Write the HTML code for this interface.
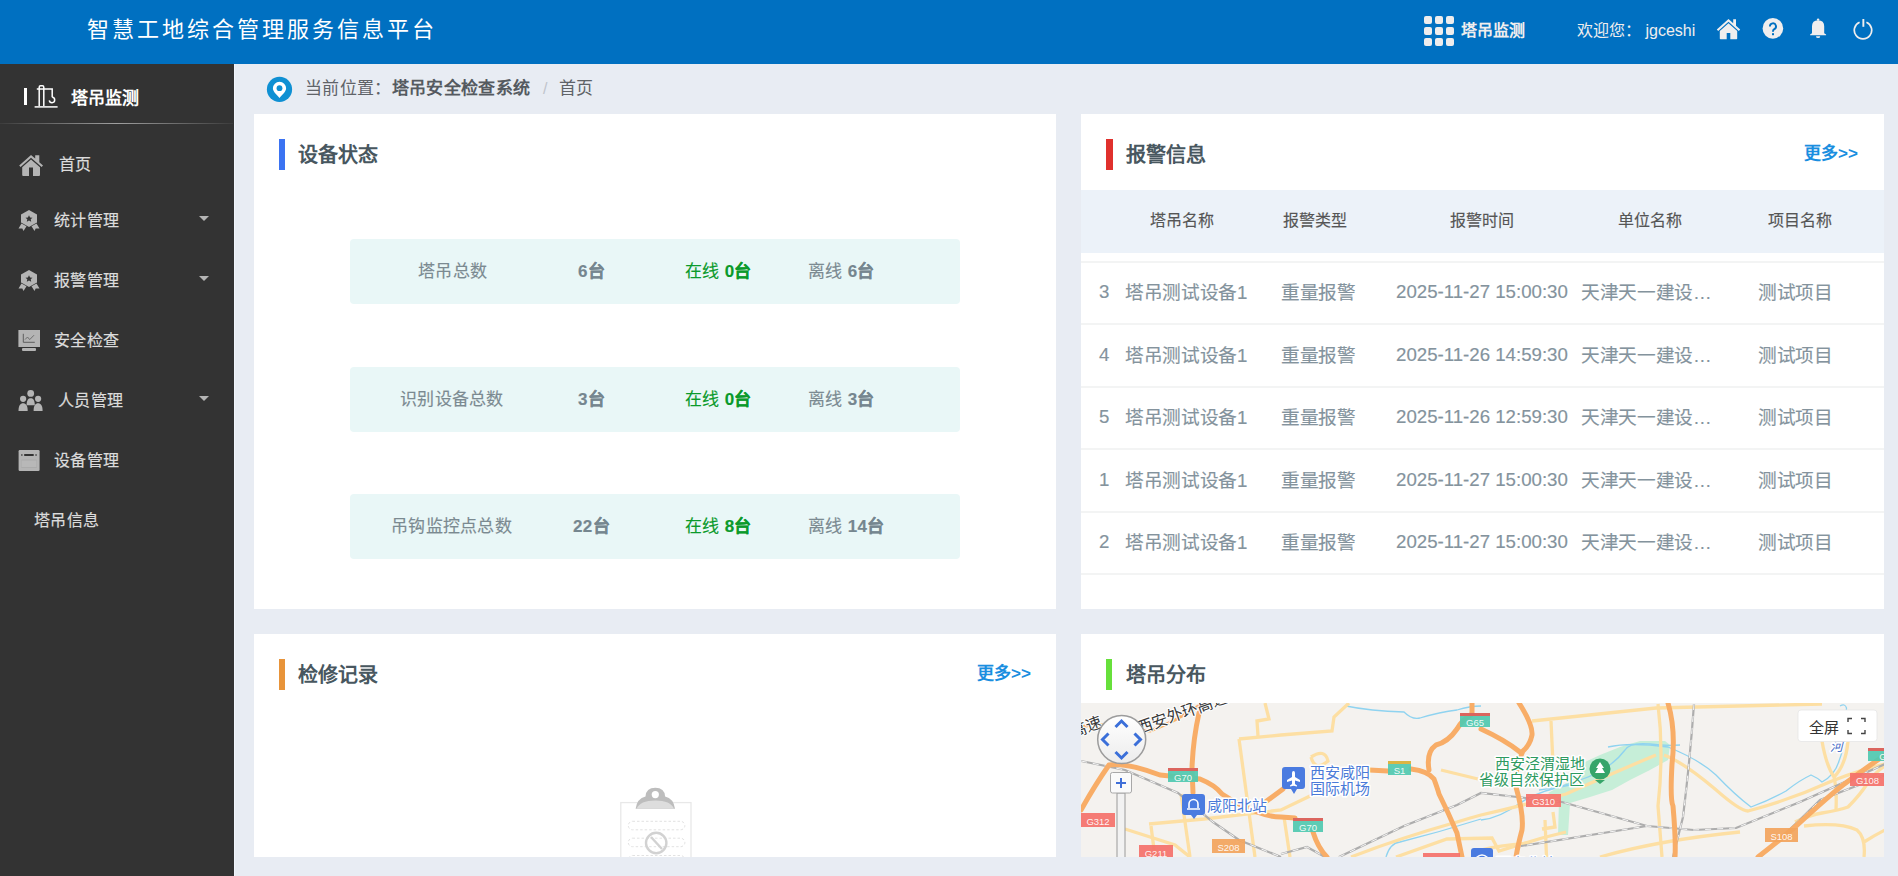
<!DOCTYPE html>
<html lang="zh-CN"><head><meta charset="utf-8">
<style>
*{box-sizing:border-box;margin:0;padding:0}
html,body{width:1898px;height:876px;overflow:hidden;background:#e8ecf3;font-family:"Liberation Sans",sans-serif}
.abs{position:absolute}
.t{position:absolute;white-space:nowrap;line-height:1}
#hdr{left:0;top:0;width:1898px;height:64px;background:#0070c1}
#side{left:0;top:64px;width:235px;height:812px;background:#333333;border-right:1px solid #f0f5fc}
.panel{position:absolute;background:#fff}
.bar{position:absolute;width:6px;height:31px}
.ptitle{position:absolute;font-size:20px;font-weight:bold;color:#48575f;line-height:1;white-space:nowrap;margin-top:1.5px}
.more{position:absolute;font-size:17px;font-weight:bold;color:#1a8ee0;line-height:1;white-space:nowrap;margin-top:0px}
.menu{position:absolute;font-size:16px;color:#dcdcdc;line-height:1;white-space:nowrap;margin-top:1px;letter-spacing:0.25px;-webkit-text-stroke:0.2px #dcdcdc}
.stat{position:absolute;left:350px;width:610px;height:65px;background:#e9f7f7;border-radius:4px}
.stat .t{font-size:17px;color:#7b8a91;top:24px;letter-spacing:0.3px;-webkit-text-stroke:0.15px currentColor}
.stat b{color:#75868f}
.stat .g{color:#0b9a2b}
.stat .g b{color:#0b9a2b}
.th{position:absolute;top:213px;font-size:16px;color:#555;line-height:1;white-space:nowrap;-webkit-text-stroke:0.15px currentColor}
.row .t{font-size:18.67px;color:#84939d;-webkit-text-stroke:0.15px currentColor}
.row .c{letter-spacing:-0.33px;margin-top:1px}
.rl{position:absolute;left:1081px;width:803px;height:2px;background:#f3f4f4}
</style></head><body>
<div id="hdr" class="abs">
  <div class="t" style="left:87px;top:19px;font-size:22px;letter-spacing:3px;color:#fff">智慧工地综合管理服务信息平台</div>
  <svg class="abs" style="left:1424px;top:16px" width="30" height="30" viewBox="0 0 30 30">
    <g fill="#eeeded">
    <rect x="0" y="0" width="8" height="8" rx="2"/><rect x="11" y="0" width="8" height="8" rx="2"/><rect x="22" y="0" width="8" height="8" rx="2"/>
    <rect x="0" y="11" width="8" height="8" rx="2"/><rect x="11" y="11" width="8" height="8" rx="2"/><rect x="22" y="11" width="8" height="8" rx="2"/>
    <rect x="0" y="22" width="8" height="8" rx="2"/><rect x="11" y="22" width="8" height="8" rx="2"/><rect x="22" y="22" width="8" height="8" rx="2"/>
    </g></svg>
  <div class="t" style="left:1461px;top:23px;font-size:16px;font-weight:bold;color:#f0eeee">塔吊监测</div>
  <div class="t" style="left:1577px;top:23px;font-size:16px;color:#f0eeee">欢迎您： jgceshi</div>
  <!-- home -->
  <svg class="abs" style="left:1716px;top:18px" width="25" height="22" viewBox="0 0 25 22">
    <path fill="#f0eeee" d="M12.5 1 L0.8 11.5 L2.2 12.9 L12.5 3.8 L22.8 12.9 L24.2 11.5 L20 7.7 L20 1.2 L17.2 1.2 L17.2 5.2 Z"/>
    <path fill="#f0eeee" d="M12.5 5.3 L3.8 13 L3.8 20.5 Q3.8 21.2 4.5 21.2 L10.7 21.2 L10.7 15 L14.3 15 L14.3 21.2 L20.5 21.2 Q21.2 21.2 21.2 20.5 L21.2 13 Z"/>
  </svg>
  <!-- help -->
  <svg class="abs" style="left:1762px;top:18px" width="22" height="22" viewBox="0 0 22 22">
    <circle cx="10.9" cy="10.4" r="10.3" fill="#f0eeee"/>
    <path d="M7.9 8.4 A3.05 3.05 0 1 1 12.3 11.1 Q11 11.9 11 13.2 L11 13.8" fill="none" stroke="#0070c1" stroke-width="1.9"/>
    <rect x="10" y="15.2" width="2" height="2" fill="#0070c1"/>
  </svg>
  <!-- bell -->
  <svg class="abs" style="left:1810px;top:18px" width="17" height="21" viewBox="0 0 17 21">
    <circle cx="8.1" cy="1.6" r="1.2" fill="#f0eeee"/>
    <path fill="#f0eeee" d="M2 15.3 L2 8.3 Q2 2.3 8.1 2.3 Q14.2 2.3 14.2 8.3 L14.2 15.3 L16.1 16.4 L16.1 17.3 L0.1 17.3 L0.1 16.4 Z"/>
    <path fill="#f0eeee" d="M6 18.2 L10.2 18.2 Q10.2 20.1 8.1 20.1 Q6 20.1 6 18.2 Z"/>
  </svg>
  <!-- power -->
  <svg class="abs" style="left:1853px;top:18px" width="21" height="22" viewBox="0 0 21 22">
    <path d="M6.6 4.2 A8.7 8.7 0 1 0 13.4 4.2" fill="none" stroke="#f0eeee" stroke-width="1.7"/>
    <rect x="9.4" y="1" width="1.9" height="7.8" fill="#f0eeee"/>
  </svg>
</div>

<div id="side" class="abs">
  <div class="abs" style="left:24px;top:24px;width:3px;height:17px;background:#fff"></div>
  <svg class="abs" style="left:34px;top:20px" width="25" height="25" viewBox="34 84 25 25">
    <g fill="none" stroke="#fff" stroke-width="1.5">
      <path d="M39.2 106 L39.2 87.2 Q39.2 85.8 40.6 85.8 L42.4 85.8 Q43.8 85.8 43.8 87.2 L43.8 106"/>
      <path d="M36.8 88.9 L52.2 88.9 L52.2 97.3"/>
      <path d="M52.2 97.3 A2.7 2.7 0 1 1 49.3 100.3"/>
      <path d="M34.6 106.9 L57.6 106.9"/>
    </g>
  </svg>
  <div class="t" style="left:71px;top:25.5px;font-size:17px;font-weight:bold;color:#fff">塔吊监测</div>
  <div class="abs" style="left:0;top:59px;width:233px;height:1px;background:linear-gradient(90deg,#3c3c3c,#a0a0a0 50%,#3c3c3c)"></div>

  <!-- home -->
  <svg class="abs" style="left:18px;top:90px" width="26" height="23" viewBox="18 154 26 23">
    <path fill="#b4b4b4" d="M31 155 L19.2 165.6 L20.6 167 L31 157.8 L41.6 167 L43 165.6 L39.3 162.3 L39.3 155.2 L35.2 155.2 L35.2 158.6 Z"/>
    <path fill="#b4b4b4" d="M31 159.4 L22.2 167.2 L22.2 175 Q22.2 176 23.2 176 L29 176 L29 167.6 L33 167.6 L33 176 L39 176 Q40 176 40 175 L40 167.2 Z"/>
  </svg>
  <div class="menu" style="left:59px;top:92px">首页</div>

  <!-- badge -->
  <svg class="abs" style="left:18px;top:145px" width="23" height="23" viewBox="18 209 23 23">
    <path fill="#b4b4b4" d="M29 210 L37 214.5 L37 222.5 L29 227 L21 222.5 L21 214.5 Z"/>
    <path fill="#b4b4b4" d="M21.5 223.5 L26.5 226.3 L23.5 231 L22.3 228.6 L18.5 228.6 Z M36.5 223.5 L31.5 226.3 L34.5 231 L35.7 228.6 L39.5 228.6 Z"/>
    <path fill="#333" d="M29 215.2 L30.1 217.5 L32.5 217.7 L30.7 219.3 L31.2 221.7 L29 220.4 L26.8 221.7 L27.3 219.3 L25.5 217.7 L27.9 217.5 Z"/>
  </svg>
  <div class="menu" style="left:54px;top:148px">统计管理</div>
  <svg class="abs" style="left:199px;top:152px" width="10" height="5"><path d="M0 0 L10 0 L5 5 Z" fill="#b4b4b4"/></svg>

  <svg class="abs" style="left:18px;top:205px" width="23" height="23" viewBox="18 209 23 23">
    <path fill="#b4b4b4" d="M29 210 L37 214.5 L37 222.5 L29 227 L21 222.5 L21 214.5 Z"/>
    <path fill="#b4b4b4" d="M21.5 223.5 L26.5 226.3 L23.5 231 L22.3 228.6 L18.5 228.6 Z M36.5 223.5 L31.5 226.3 L34.5 231 L35.7 228.6 L39.5 228.6 Z"/>
    <path fill="#333" d="M29 215.2 L30.1 217.5 L32.5 217.7 L30.7 219.3 L31.2 221.7 L29 220.4 L26.8 221.7 L27.3 219.3 L25.5 217.7 L27.9 217.5 Z"/>
  </svg>
  <div class="menu" style="left:54px;top:208px">报警管理</div>
  <svg class="abs" style="left:199px;top:212px" width="10" height="5"><path d="M0 0 L10 0 L5 5 Z" fill="#b4b4b4"/></svg>

  <!-- monitor -->
  <svg class="abs" style="left:18px;top:265px" width="23" height="23" viewBox="18 329 23 23">
    <rect x="18.4" y="330" width="21.6" height="17" fill="#b4b4b4"/>
    <rect x="22" y="348" width="14" height="3" rx="1" fill="#b4b4b4"/>
    <path d="M23.3 333.8 L23.3 342.3 L34.8 342.3" fill="none" stroke="#555" stroke-width="0.9"/>
    <path d="M25 339.6 L27.5 337 L29.7 339.6 L34 335.2" fill="none" stroke="#666" stroke-width="0.9"/>
  </svg>
  <div class="menu" style="left:54px;top:268px">安全检查</div>

  <!-- people -->
  <svg class="abs" style="left:18px;top:325px" width="26" height="23" viewBox="18 389 26 23">
    <g fill="#b4b4b4">
      <circle cx="30.7" cy="393.4" r="3.4"/>
      <path d="M26.6 405.2 C26.6 399.8 28.4 398.2 30.7 398.2 C33 398.2 34.8 399.8 34.8 405.2 Z"/>
      <circle cx="23.1" cy="398.8" r="3.1"/>
      <path d="M18.5 411 C18.5 405.2 20.5 403.3 23.1 403.3 C25.7 403.3 27.7 405.2 27.7 411 Z"/>
      <circle cx="38.1" cy="398.8" r="3.1"/>
      <path d="M33.6 411 C33.6 405.2 35.6 403.3 38.1 403.3 C40.6 403.3 42.6 405.2 42.6 411 Z"/>
    </g>
  </svg>
  <div class="menu" style="left:58px;top:328px">人员管理</div>
  <svg class="abs" style="left:199px;top:332px" width="10" height="5"><path d="M0 0 L10 0 L5 5 Z" fill="#b4b4b4"/></svg>

  <!-- window -->
  <svg class="abs" style="left:18px;top:385px" width="23" height="23" viewBox="18 449 23 23">
    <rect x="18.6" y="450.1" width="21" height="20.8" rx="1.2" fill="#b4b4b4"/>
    <rect x="24.2" y="454" width="9.5" height="2" fill="#333"/>
    <rect x="21.2" y="454" width="1.3" height="2" fill="#555"/>
    <rect x="35.4" y="454" width="1.3" height="2" fill="#555"/>
    <rect x="21.3" y="459.6" width="15.3" height="8.4" fill="#a8a8a8"/>
    <rect x="21.6" y="460.4" width="14.7" height="6.8" fill="#b8b8b8"/>
  </svg>
  <div class="menu" style="left:54px;top:388px">设备管理</div>

  <div class="menu" style="left:34px;top:448px">塔吊信息</div>
</div>

<!-- breadcrumb -->
<svg class="abs" style="left:266px;top:76px" width="27" height="27" viewBox="0 0 27 27">
  <circle cx="13.5" cy="13.4" r="12.6" fill="#0f90d3"/>
  <path d="M13.5 21.9 C10.2 18.2 6.9 15.6 6.9 12.3 A6.6 6.6 0 0 1 20.1 12.3 C20.1 15.6 16.8 18.2 13.5 21.9 Z" fill="#fff"/>
  <circle cx="13.5" cy="12.2" r="2.9" fill="#0f90d3"/>
</svg>
<div class="t" style="left:305px;top:80px;font-size:17px;color:#5f6368;letter-spacing:0.35px">当前位置：<b style="color:#555a60">塔吊安全检查系统</b></div>
<div class="t" style="left:543px;top:81px;font-size:16px;color:#c0c4cc">/</div>
<div class="t" style="left:559px;top:80px;font-size:17px;color:#5f6368">首页</div>

<!-- panel 1 -->
<div class="panel" style="left:254px;top:114px;width:802px;height:495px"></div>
<div class="bar" style="left:279px;top:139px;background:#3b73f2"></div>
<div class="ptitle" style="left:298px;top:143px">设备状态</div>

<div class="stat" style="top:239px">
  <div class="t" style="left:68px">塔吊总数</div>
  <div class="t" style="left:228px"><b>6台</b></div>
  <div class="t g" style="left:335px">在线 <b>0台</b></div>
  <div class="t" style="left:458px">离线 <b>6台</b></div>
</div>
<div class="stat" style="top:367px">
  <div class="t" style="left:50px">识别设备总数</div>
  <div class="t" style="left:228px"><b>3台</b></div>
  <div class="t g" style="left:335px">在线 <b>0台</b></div>
  <div class="t" style="left:458px">离线 <b>3台</b></div>
</div>
<div class="stat" style="top:494px">
  <div class="t" style="left:41px">吊钩监控点总数</div>
  <div class="t" style="left:223px"><b>22台</b></div>
  <div class="t g" style="left:335px">在线 <b>8台</b></div>
  <div class="t" style="left:458px">离线 <b>14台</b></div>
</div>

<!-- panel 2 -->
<div class="panel" style="left:1081px;top:114px;width:803px;height:495px"></div>
<div class="bar" style="left:1106px;top:139px;background:#e0312d;width:7px"></div>
<div class="ptitle" style="left:1126px;top:143px">报警信息</div>
<div class="more" style="left:1804px;top:145px">更多&gt;&gt;</div>
<div class="abs" style="left:1081px;top:190px;width:803px;height:63px;background:#ecf2f9"></div>
<div class="th" style="left:1150px">塔吊名称</div>
<div class="th" style="left:1283px">报警类型</div>
<div class="th" style="left:1450px">报警时间</div>
<div class="th" style="left:1618px">单位名称</div>
<div class="th" style="left:1768px">项目名称</div>
<div class="rl" style="top:261px"></div>
<div class="rl" style="top:323px"></div>
<div class="rl" style="top:386px"></div>
<div class="rl" style="top:448px"></div>
<div class="rl" style="top:511px"></div>
<div class="rl" style="top:573px"></div>
<div class="row">
<div class="t" style="left:1099px;top:283.0px">3</div>
<div class="t c" style="left:1125px;top:283.0px">塔吊测试设备1</div>
<div class="t c" style="left:1281px;top:283.0px">重量报警</div>
<div class="t" style="left:1396px;top:283.0px">2025-11-27 15:00:30</div>
<div class="t c" style="left:1581px;top:283.0px">天津天一建设…</div>
<div class="t c" style="left:1758px;top:283.0px">测试项目</div>
<div class="t" style="left:1099px;top:345.5px">4</div>
<div class="t c" style="left:1125px;top:345.5px">塔吊测试设备1</div>
<div class="t c" style="left:1281px;top:345.5px">重量报警</div>
<div class="t" style="left:1396px;top:345.5px">2025-11-26 14:59:30</div>
<div class="t c" style="left:1581px;top:345.5px">天津天一建设…</div>
<div class="t c" style="left:1758px;top:345.5px">测试项目</div>
<div class="t" style="left:1099px;top:408.0px">5</div>
<div class="t c" style="left:1125px;top:408.0px">塔吊测试设备1</div>
<div class="t c" style="left:1281px;top:408.0px">重量报警</div>
<div class="t" style="left:1396px;top:408.0px">2025-11-26 12:59:30</div>
<div class="t c" style="left:1581px;top:408.0px">天津天一建设…</div>
<div class="t c" style="left:1758px;top:408.0px">测试项目</div>
<div class="t" style="left:1099px;top:470.5px">1</div>
<div class="t c" style="left:1125px;top:470.5px">塔吊测试设备1</div>
<div class="t c" style="left:1281px;top:470.5px">重量报警</div>
<div class="t" style="left:1396px;top:470.5px">2025-11-27 15:00:30</div>
<div class="t c" style="left:1581px;top:470.5px">天津天一建设…</div>
<div class="t c" style="left:1758px;top:470.5px">测试项目</div>
<div class="t" style="left:1099px;top:533.0px">2</div>
<div class="t c" style="left:1125px;top:533.0px">塔吊测试设备1</div>
<div class="t c" style="left:1281px;top:533.0px">重量报警</div>
<div class="t" style="left:1396px;top:533.0px">2025-11-27 15:00:30</div>
<div class="t c" style="left:1581px;top:533.0px">天津天一建设…</div>
<div class="t c" style="left:1758px;top:533.0px">测试项目</div>
</div>

<!-- panel 3 -->
<div class="panel" style="left:254px;top:634px;width:802px;height:223px;overflow:hidden">
<svg class="abs" style="left:354px;top:150px" width="100" height="73" viewBox="608 784 100 73">
  <rect x="620.8" y="802.6" width="70.2" height="80" fill="#fff" stroke="#e8e8e8" stroke-width="1.3"/>
  <path d="M635.6 808.8 Q637 798.5 645.5 796.5 Q646 787.8 655.3 787.8 Q664.6 787.8 665.1 796.5 Q673.6 798.5 675 808.8 Z" fill="#bdbdbd"/>
  <path d="M636.6 808.8 Q640 800.5 655.3 800.5 Q670.6 800.5 674 808.8 Z" fill="#dddddd"/>
  <circle cx="655.3" cy="794.6" r="3.6" fill="#fff"/>
  <g fill="none" stroke="#e2e2e2" stroke-width="1" stroke-dasharray="2.5 2">
   <rect x="628.3" y="821.3" width="56.5" height="8.5" rx="4.2"/>
   <rect x="628.3" y="838.2" width="56.5" height="8.5" rx="4.2"/>
   <rect x="628.3" y="855.5" width="56.5" height="8.5" rx="4.2"/>
  </g>
  <circle cx="656.2" cy="843" r="10.2" fill="none" stroke="#d2d2d2" stroke-width="2.4"/>
  <path d="M651 837 L662 849" stroke="#d2d2d2" stroke-width="2.4"/>
</svg>
</div>
<div class="bar" style="left:279px;top:659px;background:#e8943a"></div>
<div class="ptitle" style="left:298px;top:663px">检修记录</div>
<div class="more" style="left:977px;top:665px">更多&gt;&gt;</div>

<!-- panel 4 -->
<div class="panel" style="left:1081px;top:634px;width:803px;height:223px"></div>
<div class="bar" style="left:1106px;top:659px;background:#67e03b"></div>
<div class="ptitle" style="left:1126px;top:663px">塔吊分布</div>
<svg class="abs" style="left:1081px;top:703px" width="803" height="154" viewBox="1081 703 803 154">
<rect x="1081" y="703" width="803" height="154" fill="#f4f2ef"/>
<!-- green park -->
<path fill="#c6eed8" d="M1558 835 L1559 800 L1548 793 L1565 784 L1585 762 L1600 755 L1620 747 L1640 741 L1665 741 L1670 745 L1668 760 L1650 770 L1630 780 L1612 790 L1590 797 L1570 803 L1568 835 Z"/>
<!-- rivers -->
<g fill="none" stroke="#8fd3f0" stroke-width="1.3">
<path d="M1346 706 Q1370 711 1404 712 Q1412 720 1420 718 Q1440 712 1457 710 Q1470 706 1481 706"/>
<path d="M1386 857 Q1390 843 1400 842 Q1440 832 1481 819"/>
<path d="M1481 820 Q1500 818 1520 803 Q1540 790 1570 785"/>
<path d="M1608 747 Q1630 742 1668 747 Q1700 760 1716 775 Q1735 795 1751 807 Q1770 800 1786 791 Q1800 780 1811 775 Q1818 778 1822 782 Q1835 775 1839 761 Q1843 750 1843 747 L1846.5 708 Q1845 703 1840 706"/>
<path d="M1539 790 Q1560 788 1580 780 Q1610 770 1625 750 Q1630 742 1650 744 Q1665 746 1680 745"/>
</g>
<!-- pale roads -->
<g fill="none" stroke="#fddfa3" stroke-width="3.3">
<path d="M1265 703 L1269 719 L1257 721 L1258 736"/>
<path d="M1239 739 L1281 735 L1332 731 L1334 717 L1349 703"/>
<path d="M1239 739 L1255 857"/>
<path d="M1149 824 L1204 819 L1281 810 L1310 796 L1330 782"/>
<path d="M1151 826 L1155 857"/>
<path d="M1181 794 L1190 857"/>
<path d="M1125 829 L1175 845 L1190 857"/>
<path d="M1284 817 L1290 857"/>
<path d="M1311 757 Q1325 748 1328 761 Q1315 772 1311 757"/>
<path d="M1441 770 L1478 779"/>
<path d="M1351 857 Q1400 838 1457 822 Q1470 818 1481 815 Q1520 806 1566 794 Q1620 770 1656 755"/>
<path d="M1396 857 L1447 839 L1492 838 L1499 851 L1542 838 L1566 832"/>
<path d="M1545 820 L1546.5 857 M1542 829 L1555 827 L1553 812"/>
<path d="M1532 721 L1656 708 L1822 704"/>
<path d="M1551 721 L1553 764"/>
<path d="M1658 704 Q1664 753 1658 806 L1662 857"/>
<path d="M1664 755 Q1683 762 1715 789 Q1740 811 1748 811 Q1790 800 1832 781 Q1860 770 1885 764"/>
<path d="M1822 741 Q1826 765 1834 777 Q1837 790 1836 809"/>
<path d="M1848 741 Q1846 765 1834 777"/>
<path d="M1795 822 Q1810 815 1822 813 Q1840 810 1848 807 Q1860 795 1867 784 Q1875 772 1885 766"/>
<path d="M1804 826 Q1840 822 1857 830 Q1866 838 1864 857 M1864 842 Q1875 835 1885 830"/>
<path d="M1600 857 Q1660 840 1740 832"/>
<path d="M1481 850 Q1500 845 1530 843"/>
</g>
<!-- rails -->
<g fill="none" stroke="#adadad" stroke-width="2.2">
<path d="M1081 761 L1125 770 L1178 793 L1213 822 L1239 840 L1281 857"/>
<path d="M1281 854 L1307 847 L1325 857"/>
<path d="M1339 857 L1404 826 L1457 805 L1481 793 L1562 802 L1647 826 L1694 830 L1736 828 L1800 802 L1885 764"/>
<path d="M1694 704 Q1690 760 1683 817 L1673 857"/>
<path d="M1515 847 L1647 826"/>
<path d="M1760 857 Q1790 830 1820 800 L1885 775"/>
</g>
<g fill="none" stroke="#f6f6f6" stroke-width="1" stroke-dasharray="6 6">
<path d="M1081 761 L1125 770 L1178 793 L1213 822 L1239 840 L1281 857"/>
<path d="M1281 854 L1307 847 L1325 857"/>
<path d="M1339 857 L1404 826 L1457 805 L1481 793 L1562 802 L1647 826 L1694 830 L1736 828 L1800 802 L1885 764"/>
<path d="M1694 704 Q1690 760 1683 817 L1673 857"/>
<path d="M1515 847 L1647 826"/>
<path d="M1760 857 Q1790 830 1820 800 L1885 775"/>
</g>
<!-- orange roads -->
<path d="M1081 727 Q1100 722 1115 728 L1150 731 Q1175 722 1203 703" fill="none" stroke="#f9b06b" stroke-width="3"/>
<g fill="none" stroke="#f8ad67" stroke-width="5" stroke-linecap="round" stroke-linejoin="round">
<path d="M1081 810 Q1095 785 1109 765 Q1125 762 1160 775 L1200 779 Q1215 785 1222 794 Q1240 806 1257 812 Q1270 817 1281 817 L1295 818"/>
<path d="M1199 713 Q1193 740 1192 768 L1193 793"/>
<path d="M1264 803 Q1275 795 1283 789"/>
<path d="M1313 832 Q1318 848 1327 857"/>
<path d="M1369 770 L1388 771 M1411 769 Q1428 771 1434 779 Q1438 790 1439 794 Q1448 812 1457 833 L1462 857"/>
<path d="M1429 770 Q1426 752 1436 745 Q1448 742 1457 729 Q1462 720 1472 714 L1472 703"/>
<path d="M1519 703 Q1533 725 1532 735 Q1530 745 1523 751 Q1514 770 1516 787 Q1524 815 1522 830 Q1518 845 1516 857"/>
<path d="M1481 729 Q1505 740 1520 752"/>
<path d="M1668 703 Q1676 730 1672 764 Q1670 800 1673 806 Q1676 840 1675 857"/>
<path d="M1758 857 Q1780 840 1796 826 Q1830 795 1843 785 Q1870 765 1885 755"/>
</g>
<!-- shields -->
<g font-family="Liberation Sans" font-size="9.5" fill="#fff" fill-opacity="0.92" text-anchor="middle">
<rect x="1168" y="768" width="30" height="14" fill="#4fc9b0"/><rect x="1168" y="768" width="30" height="3" fill="#e65c57"/><text x="1183" y="780.5">G70</text>
<rect x="1293" y="818" width="30" height="14" fill="#4fc9b0"/><rect x="1293" y="818" width="30" height="3" fill="#e65c57"/><text x="1308" y="830.5">G70</text>
<rect x="1388" y="761" width="23" height="14" fill="#4fc9b0"/><rect x="1388" y="761" width="23" height="3" fill="#e6b33a"/><text x="1399.5" y="773.5">S1</text>
<rect x="1460" y="713" width="30" height="14" fill="#4fc9b0"/><rect x="1460" y="713" width="30" height="3" fill="#e65c57"/><text x="1475" y="725.5">G65</text>
<rect x="1868" y="748" width="30" height="13" fill="#4fc9b0"/><rect x="1868" y="748" width="30" height="3" fill="#e65c57"/><text x="1883" y="759.5">G</text>
<rect x="1081" y="813" width="34" height="14" fill="#f4716a"/><text x="1098" y="824.5">G312</text>
<rect x="1139" y="845" width="34" height="14" fill="#f4716a"/><text x="1156" y="856.5">G211</text>
<rect x="1423" y="853" width="37" height="14" fill="#f4716a"/>
<rect x="1212" y="839" width="33" height="14" fill="#f2a45c"/><text x="1228.5" y="850.5">S208</text>
<rect x="1526" y="794" width="35" height="13" fill="#f4716a"/><text x="1543.5" y="805">G310</text>
<rect x="1850" y="773" width="35" height="13" fill="#f4716a"/><text x="1867.5" y="784">G108</text>
<rect x="1765" y="828" width="33" height="14" fill="#f2a45c"/><text x="1781.5" y="839.5">S108</text>
</g>
<!-- markers -->
<path d="M1185 794 L1202 794 Q1205 794 1205 797 L1205 812 Q1205 815 1202 815 L1197 815 L1194 819 L1191 815 L1185 815 Q1182 815 1182 812 L1182 797 Q1182 794 1185 794 Z" fill="#4a7be0"/>
<path d="M1189 808 L1189 804 A4.5 4.5 0 1 1 1198 804 L1198 808 M1187 809 L1200 809" fill="none" stroke="#fff" stroke-width="1.6"/>
<path d="M1285 767 L1302 767 Q1305 767 1305 770 L1305 786 Q1305 789 1302 789 L1297 789 L1294 794 L1291 789 L1285 789 Q1282 789 1282 786 L1282 770 Q1282 767 1285 767 Z" fill="#4a7be0"/>
<path d="M1293.5 771 Q1295 771 1295 773 L1295 777 L1300 780 L1300 782 L1295 780.5 L1295 784 L1297 785.5 L1297 786.5 L1293.5 785.8 L1290 786.5 L1290 785.5 L1292 784 L1292 780.5 L1287 782 L1287 780 L1292 777 L1292 773 Q1292 771 1293.5 771 Z" fill="#fff"/>
<circle cx="1600" cy="769" r="10.5" fill="#36a56a"/><path d="M1595 780 L1605 780 L1600 784 Z" fill="#36a56a"/>
<path d="M1600 762 L1596 768 L1598 768 L1595 773 L1605 773 L1602 768 L1604 768 Z" fill="#fff"/>
<rect x="1471" y="848" width="22" height="20" rx="3" fill="#4a7be0"/><path d="M1476 858 Q1482 852 1488 858" fill="none" stroke="#fff" stroke-width="1.5"/>
<!-- labels -->
<g font-size="15" stroke="#fff" stroke-width="3" paint-order="stroke" stroke-linejoin="round">
<text x="1207" y="811" fill="#4a7ad8">咸阳北站</text>
<text x="1310" y="778" fill="#4a7ad8">西安咸阳</text>
<text x="1310" y="794" fill="#4a7ad8">国际机场</text>
<text x="1495" y="769" fill="#2e9a60">西安泾渭湿地</text>
<text x="1479" y="785" fill="#2e9a60">省级自然保护区</text>
<text x="1496" y="869" fill="#4a7ad8">西安北站</text>
<text x="1830" y="751" fill="#4a6fc8" font-size="13" font-style="italic">河</text>
<text x="1103" y="727" fill="#3a3a3a" font-size="16" stroke-width="2" text-anchor="end" transform="rotate(-19.5 1103 727)">高速</text>
<text x="1139" y="734" fill="#3a3a3a" font-size="16" stroke-width="2" transform="rotate(-19.5 1139 734)">西安外环高速</text>
</g>
<!-- nav control -->
<defs><linearGradient id="ng" x1="0" y1="0" x2="0" y2="1"><stop offset="0" stop-color="#ffffff"/><stop offset="1" stop-color="#ececec"/></linearGradient></defs>
<circle cx="1121.7" cy="739.6" r="24" fill="url(#ng)" stroke="#9c9c9c" stroke-width="1.5"/>
<g fill="none" stroke="#3b6fd9" stroke-width="3" stroke-linecap="butt" stroke-linejoin="miter">
<path d="M1115.5 727 L1121.5 721 L1127.5 727"/>
<path d="M1115.5 752 L1121.5 758 L1127.5 752"/>
<path d="M1108.5 733.5 L1102.5 739.5 L1108.5 745.5"/>
<path d="M1134.5 733.5 L1140.5 739.5 L1134.5 745.5"/>
</g>
<rect x="1117" y="793" width="8" height="70" fill="#f2f2f2" stroke="#9a9a9a" stroke-width="1"/>
<rect x="1110.5" y="772.5" width="21" height="20.5" rx="2" fill="#fafafa" stroke="#a8a8a8" stroke-width="1"/>
<path d="M1121 778 L1121 788 M1116 783 L1126 783" stroke="#3f6fd8" stroke-width="2"/>
<!-- fullscreen -->
<rect x="1798" y="710" width="79" height="31.5" rx="3" fill="#fff" stroke="#e6e6e6" stroke-width="0.8"/>
<text x="1809" y="732.5" font-size="15" fill="#333">全屏</text>
<path d="M1848 722 L1848 718.5 L1852 718.5 M1861 718.5 L1865 718.5 L1865 722 M1865 730 L1865 733.5 L1861 733.5 M1852 733.5 L1848 733.5 L1848 730" fill="none" stroke="#444" stroke-width="1.4"/>
</svg>

</body></html>
